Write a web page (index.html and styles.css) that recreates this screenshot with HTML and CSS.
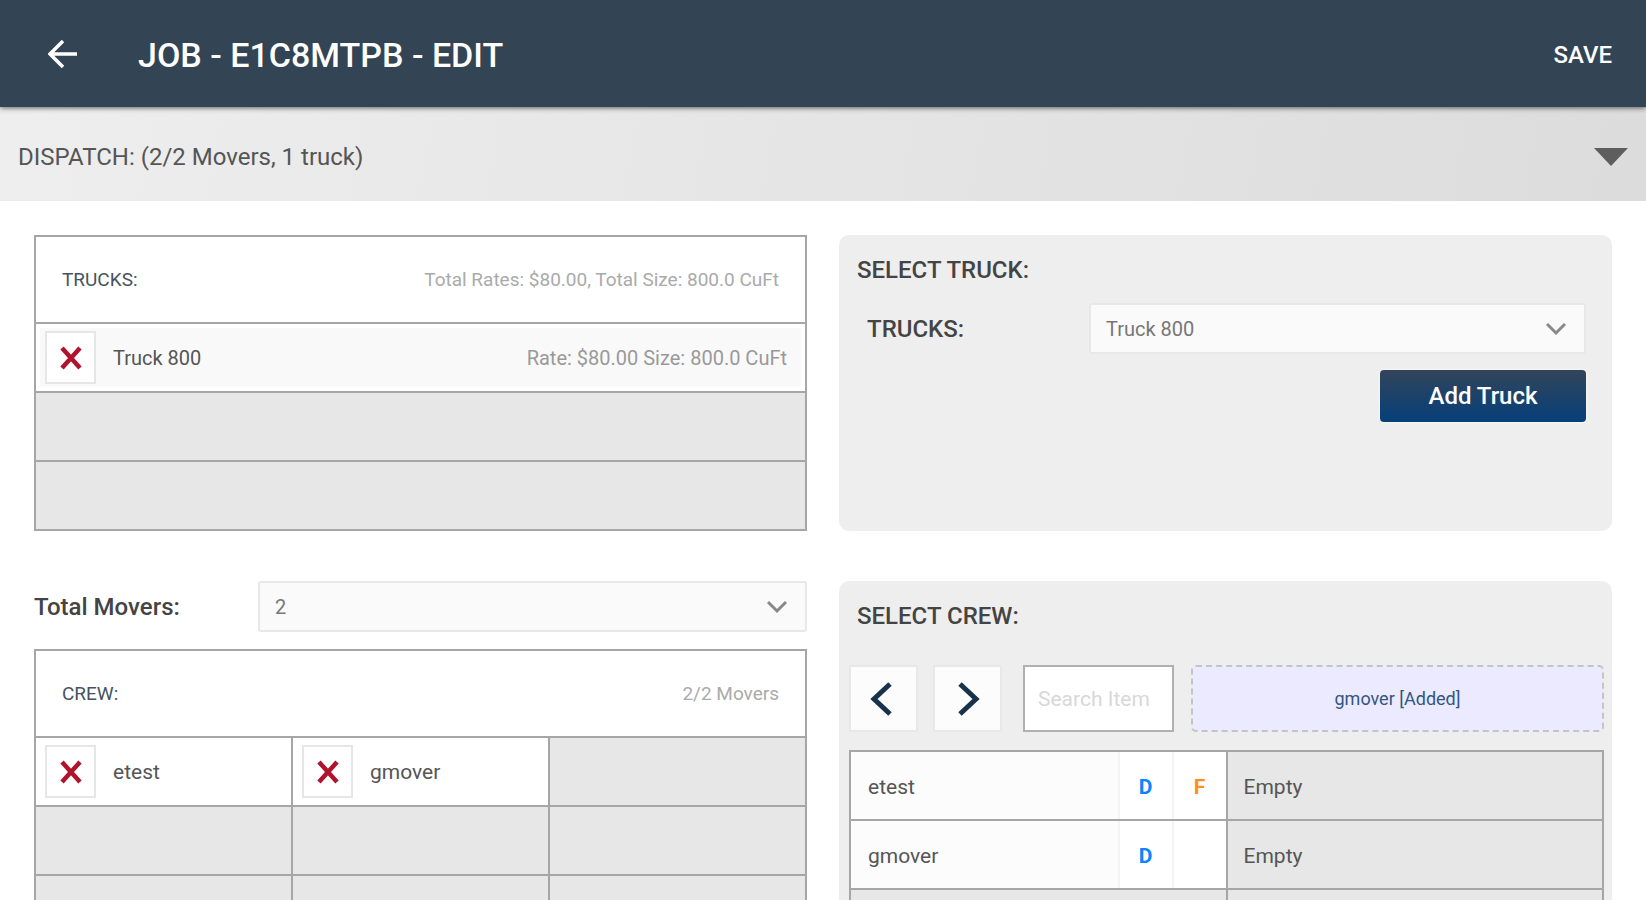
FILE: index.html
```html
<!DOCTYPE html>
<html lang="en">
<head>
    <meta charset="UTF-8">
    <meta name="viewport" content="width=device-width, initial-scale=1.0">
    <title>Job - Edit</title>
    <link rel="stylesheet" href="styles.css">
</head>
<body>

    <header class="toolbar">
        <button class="back" type="button" aria-label="Back">
            <svg width="30" height="30" viewBox="0 0 30 30"><path d="M29 14H3M15 1L2 14l13 13" fill="none" stroke="#fff" stroke-width="3.5"/></svg>
        </button>
        <h1>JOB - E1C8MTPB - EDIT</h1>
        <button class="save" type="button">SAVE</button>
    </header>

    <button class="section-bar" type="button">
        <span>DISPATCH: (2/2 Movers, 1 truck)</span>
        <svg width="34" height="18" viewBox="0 0 34 18"><path d="M0 0h34L17 18z" fill="#5e5e5e"/></svg>
    </button>

    <main class="content">
        <div class="column">
            <table class="grid trucks">
                <thead>
                    <tr>
                        <th><div class="head"><span>TRUCKS:</span><span class="info">Total Rates: $80.00, Total Size: 800.0 CuFt</span></div></th>
                    </tr>
                </thead>
                <tbody>
                    <tr>
                        <td class="filled">
                            <div class="item shaded">
                                <button class="remove" type="button" aria-label="Remove Truck 800">
                                    <svg width="22" height="24" viewBox="0 0 22 24"><path d="M2 2l18 20M20 2L2 22" stroke="#b0142c" stroke-width="4.5"/></svg>
                                </button>
                                <span>Truck 800</span>
                                <span class="rate">Rate: $80.00 Size: 800.0 CuFt</span>
                            </div>
                        </td>
                    </tr>
                    <tr><td></td></tr>
                    <tr><td></td></tr>
                </tbody>
            </table>
        </div>

        <section class="panel">
            <h2>SELECT TRUCK:</h2>
            <div class="field truck-field">
                <label for="truck">TRUCKS:</label>
                <div class="select">
                    <select id="truck"><option>Truck 800</option></select>
                    <svg width="20" height="14" viewBox="0 0 20 14"><path d="M1 2l9 9 9-9" fill="none" stroke="#888" stroke-width="3"/></svg>
                </div>
            </div>
            <button class="add" type="button">Add Truck</button>
        </section>

        <div class="column">
            <div class="field">
                <label for="movers">Total Movers:</label>
                <div class="select">
                    <select id="movers"><option>2</option></select>
                    <svg width="20" height="14" viewBox="0 0 20 14"><path d="M1 2l9 9 9-9" fill="none" stroke="#888" stroke-width="3"/></svg>
                </div>
            </div>
            <table class="grid">
                <thead>
                    <tr>
                        <th colspan="3"><div class="head"><span>CREW:</span><span class="info">2/2 Movers</span></div></th>
                    </tr>
                </thead>
                <tbody>
                    <tr>
                        <td class="filled">
                            <div class="item">
                                <button class="remove" type="button" aria-label="Remove etest">
                                    <svg width="22" height="24" viewBox="0 0 22 24"><path d="M2 2l18 20M20 2L2 22" stroke="#b0142c" stroke-width="4.5"/></svg>
                                </button>
                                <span>etest</span>
                            </div>
                        </td>
                        <td class="filled">
                            <div class="item">
                                <button class="remove" type="button" aria-label="Remove gmover">
                                    <svg width="22" height="24" viewBox="0 0 22 24"><path d="M2 2l18 20M20 2L2 22" stroke="#b0142c" stroke-width="4.5"/></svg>
                                </button>
                                <span>gmover</span>
                            </div>
                        </td>
                        <td></td>
                    </tr>
                    <tr><td></td><td></td><td></td></tr>
                    <tr><td></td><td></td><td></td></tr>
                </tbody>
            </table>
        </div>

        <section class="panel">
            <h2>SELECT CREW:</h2>
            <div class="crew-tools">
                <button class="page" type="button" aria-label="Previous">
                    <svg width="28" height="34" viewBox="0 0 28 34"><path d="M20 2L4 17l16 15" fill="none" stroke="#17324a" stroke-width="5"/></svg>
                </button>
                <button class="page" type="button" aria-label="Next">
                    <svg width="28" height="34" viewBox="0 0 28 34"><path d="M6 2l16 15L6 32" fill="none" stroke="#17324a" stroke-width="5"/></svg>
                </button>
                <input class="search" type="text" placeholder="Search Item" aria-label="Search Item">
                <div class="drop">gmover [Added]</div>
            </div>
            <table class="grid crew-list">
                <tbody>
                    <tr>
                        <td class="filled"><div class="member"><span class="name">etest</span><span class="tag driver">D</span><span class="tag foreman">F</span></div></td>
                        <td class="empty">Empty</td>
                    </tr>
                    <tr>
                        <td class="filled"><div class="member"><span class="name">gmover</span><span class="tag driver">D</span><span class="tag foreman"></span></div></td>
                        <td class="empty">Empty</td>
                    </tr>
                    <tr><td></td><td></td></tr>
                </tbody>
            </table>
        </section>
    </main>

</body>
</html>
```
FILE: styles.css
```css
* {
    box-sizing: border-box;
}
html {
    scrollbar-width: none;
}
body {
    margin: 0;
    background-color: #fff;
    color: #555;
    font-family: Roboto, Arial, sans-serif;
    font-size: 21px;
}
button, input, select {
    font-family: inherit;
    font-size: inherit;
    margin: 0;
}
button {
    cursor: pointer;
}
svg {
    display: block;
}

/* top bar */
.toolbar {
    position: relative;
    display: flex;
    align-items: center;
    height: 107px;
    padding: 2px 34px 0 48px;
    background-color: #334454;
    box-shadow: 0 1px 5px rgba(0, 0, 0, 0.6);
    color: #fff;
}
.toolbar h1 {
    flex: 1;
    margin: 0 0 0 60px;
    font-size: 34px;
    font-weight: 500;
}
.back, .save {
    padding: 0;
    border: none;
    background: none;
    color: #fff;
}
.save {
    font-size: 24px;
    font-weight: 500;
}

.section-bar {
    display: flex;
    justify-content: space-between;
    align-items: center;
    width: 100%;
    height: 94px;
    padding: 6px 18px 0;
    border: none;
    background: linear-gradient(100deg, #eee, #dcdcdc);
    color: #555;
    font-size: 24px;
}

/* two column layout */
.content {
    display: grid;
    grid-template-columns: 1fr 1fr;
    column-gap: 32px;
    row-gap: 50px;
    padding: 34px 34px;
}
.panel {
    padding: 20px 8px 16px 10px;
    border-radius: 10px;
    background-color: #eee;
}
.panel h2 {
    margin: 0 0 0 8px;
    color: #444;
    font-size: 24px;
    font-weight: 500;
    line-height: 30px;
}

/* tables */
.grid {
    width: 100%;
    border-collapse: collapse;
    table-layout: fixed;
}
.grid th, .grid td {
    height: 69px;
    padding: 0;
    border: 2px solid #a6a6a6;
    background-color: #e7e7e7;
    text-align: left;
}
.grid th {
    height: 87px;
    background-color: #fff;
    font-weight: 400;
}
.grid .filled {
    background-color: #fff;
}
.head {
    display: flex;
    justify-content: space-between;
    padding: 0 26px;
    color: #46535f;
    font-size: 19px;
}
.info {
    color: #aaa;
}
.trucks {
    font-size: 20px;
}
.item {
    display: flex;
    align-items: center;
    height: 59px;
    margin: 0 4px;
    padding: 0 14px 0 5px;
}
.shaded {
    background-color: #f9f9f9;
}
.remove {
    display: flex;
    justify-content: center;
    align-items: center;
    width: 51px;
    height: 53px;
    margin-right: 17px;
    padding: 0;
    border: 2px solid #e6e6e6;
    background-color: #fff;
}
.rate {
    margin-left: auto;
    color: #999;
}

/* form rows */
.field {
    display: flex;
    align-items: center;
    margin-bottom: 17px;
}
.field label {
    width: 224px;
    color: #444;
    font-size: 24px;
    font-weight: 500;
}
.select {
    position: relative;
    flex: 1;
}
.select select {
    display: block;
    width: 100%;
    height: 51px;
    padding: 0 15px;
    border: 2px solid #e8e8e8;
    border-radius: 3px;
    background-color: #fafafa;
    color: #777;
    font-size: 20px;
    appearance: none;
}
.select svg {
    position: absolute;
    top: 50%;
    right: 20px;
    margin-top: -7px;
    pointer-events: none;
}
.truck-field {
    margin: 18px 18px 16px 18px;
}
.truck-field label {
    width: 222px;
}
.add {
    display: block;
    width: 206px;
    height: 52px;
    margin: 0 18px 0 auto;
    border: none;
    border-radius: 4px;
    background: linear-gradient(#33445a, #05407a);
    box-shadow: 0 0 3px #fff;
    color: #fff;
    font-size: 24px;
    font-weight: 500;
}

/* crew picker */
.crew-tools {
    display: flex;
    margin: 34px 0 18px;
}
.page {
    display: flex;
    justify-content: center;
    align-items: center;
    width: 69px;
    height: 67px;
    margin-right: 15px;
    padding: 0;
    border: 2px solid #e8e8e8;
    background-color: #fcfcfc;
}
.search {
    width: 151px;
    height: 67px;
    margin: 0 17px 0 6px;
    padding: 0 13px;
    border: 2px solid #b0b0b0;
    background-color: #fff;
}
.search::placeholder {
    color: #d8d8d8;
}
.drop {
    display: flex;
    flex: 1;
    justify-content: center;
    align-items: center;
    height: 67px;
    border: 2px dashed #c4c4c8;
    border-radius: 5px;
    background-color: #ebeaff;
    color: #345680;
    font-size: 18px;
}
.member {
    display: flex;
    height: 67px;
    line-height: 70px;
}
.name {
    flex: 1;
    padding-left: 17px;
    background-color: #fcfcfc;
}
.tag {
    width: 54px;
    border-left: 2px solid #f4f4f4;
    font-weight: 700;
    text-align: center;
}
.driver {
    color: #0a84ff;
}
.foreman {
    color: #ff9020;
}
.grid .empty {
    padding: 2px 0 0 16px;
}
```
